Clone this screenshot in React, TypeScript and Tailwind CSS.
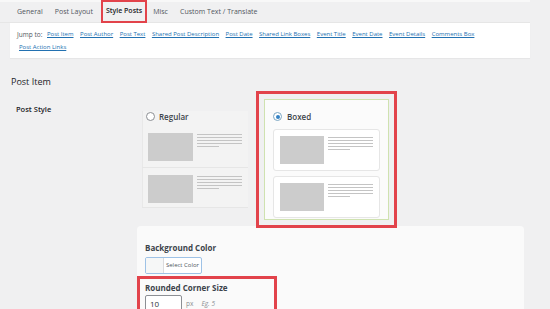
import * as React from "react";

const tabs = ["General", "Post Layout", "Style Posts", "Misc", "Custom Text / Translate"];

const jumpLinks = [
  "Post Item",
  "Post Author",
  "Post Text",
  "Shared Post Description",
  "Post Date",
  "Shared Link Boxes",
  "Event Title",
  "Event Date",
  "Event Details",
  "Comments Box",
  "Post Action Links",
];

const PreviewLines = () => (
  <div className="flex flex-col gap-[2px] pt-[1px]">
    <div className="h-px w-[45px] bg-[#c4c4c4]" />
    <div className="h-px w-[45px] bg-[#c4c4c4]" />
    <div className="h-px w-[45px] bg-[#c4c4c4]" />
    <div className="h-px w-[45px] bg-[#c4c4c4]" />
    <div className="h-px w-[22px] bg-[#c4c4c4]" />
  </div>
);

const PreviewItem = () => (
  <div className="flex gap-[4px]">
    <div className="h-[28px] w-[45px] bg-[#cccccc]" />
    <PreviewLines />
  </div>
);

const Radio = ({ checked }: { checked?: boolean }) => (
  <span
    className={`flex size-[9px] items-center justify-center rounded-full border bg-white ${
      checked ? "border-[#7aa6c2]" : "border-[#8c8f94]"
    }`}
  >
    {checked && <span className="size-[4px] rounded-full bg-[#3582c4]" />}
  </span>
);

export default function App() {
  return (
    <div
      className="h-[309px] w-[550px] overflow-hidden bg-[#f0f0f1] text-[#3c434a]"
      style={{ fontFamily: '"Open Sans", "Noto Sans", sans-serif' }}
    >
      {/* tabs */}
      <div className="flex h-[23px] w-[530px] items-start border-t-2 border-[#f8f8f8] pl-[11px] shadow-[inset_0_-1px_0_#e6e6e6]">
        {tabs.map((t) =>
          t === "Style Posts" ? (
            <div
              key={t}
              className="-mt-[2px] ml-[2px] flex h-[23px] items-center border-2 border-[#e2434b] px-[3px] text-[7px] font-semibold text-[#1d2327]"
            >
              {t}
            </div>
          ) : (
            <div key={t} className="flex h-[20px] items-center px-[6px] text-[7px] text-[#50575e]">
              {t}
            </div>
          )
        )}
      </div>

      {/* jump to */}
      <div className="mx-[10px] w-[520px] bg-white px-[7px] pb-[5px] pt-[6px] shadow-[0_1px_1px_rgba(0,0,0,0.04)]">
        <div className="flex flex-wrap gap-x-[6.5px] gap-y-[2px] text-[6px] leading-[11px]">
          <span className="mr-[-1.5px] w-[25px] shrink-0 whitespace-nowrap text-[6.5px] text-[#50575e]">Jump to:</span>
          {jumpLinks.map((l, i) => (
            <a
              key={l}
              className={`whitespace-nowrap text-[#2271b1] underline ${i === jumpLinks.length - 1 ? "basis-full pl-[2px]" : ""}`}
            >
              {l}
            </a>
          ))}
        </div>
      </div>

      {/* section heading */}
      <div className="pl-[11px] pt-[17px] text-[9px] font-medium text-[#1d2327]">Post Item</div>

      {/* post style row */}
      <div className="mt-[2px] flex">
        <div className="w-[142px] pl-[16px] pt-[13px] text-[7.5px] font-semibold text-[#1d2327]">Post Style</div>

        <div className="flex items-start gap-[8px]">
          {/* regular */}
          <div className="mt-[20px] w-[106px] bg-[#f3f3f3] shadow-[inset_1px_0_0_#e8e8e8]">
            <div className="flex items-center gap-[4px] pl-[4px]">
              <Radio />
              <span className="text-[8px] font-semibold text-[#3c434a]">Regular</span>
            </div>
            <div className="border-b border-[#e6e6e6] pb-[6px] pl-[6px] pt-[10px]">
              <PreviewItem />
            </div>
            <div className="border-b border-[#e6e6e6] pb-[4px] pl-[6px] pt-[7px]">
              <PreviewItem />
            </div>
          </div>

          {/* boxed */}
          <div className="h-[137px] w-[141px] border-[3px] border-[#e2434b] p-[5px]">
            <div className="h-full w-full border border-[#cfe2b0] bg-[#fbfbfb] px-[8px] pt-[11px]">
              <div className="flex items-center gap-[5px]">
                <Radio checked />
                <span className="text-[8px] font-semibold text-[#3c434a]">Boxed</span>
              </div>
              <div className="mt-[6px] flex flex-col gap-[5px]">
                <div className="w-[107px] rounded-[3px] border border-[#e6e6e6] bg-white p-[6px]">
                  <PreviewItem />
                </div>
                <div className="w-[107px] rounded-[3px] border border-[#e6e6e6] bg-white p-[6px]">
                  <PreviewItem />
                </div>
              </div>
            </div>
          </div>
        </div>
      </div>

      {/* settings panel */}
      <div className="-mt-[2px] ml-[137px] w-[387px] rounded-t-[4px] bg-[#fafafa] pt-[16px]">
        <div className="pl-[8px] text-[8px] font-bold text-[#3c434a]">Background Color</div>
        <div className="ml-[8px] mt-[3px] flex h-[17px] w-[57px] overflow-hidden rounded-[2px] border border-[#9ec2e6] bg-white">
          <div className="w-[18px] border-r border-[#dcdcde] bg-[#f6f7f7]" />
          <div className="flex flex-1 items-center justify-center text-[6px] text-[#50575e]">Select Color</div>
        </div>
        <div className="mt-[2px] w-[140px] border-[3px] border-b-0 border-[#e2434b] pl-[5px] pt-[3px]">
          <div className="text-[8px] font-bold text-[#3c434a]">Rounded Corner Size</div>
          <div className="mt-[1px] flex items-center">
            <div className="flex h-[18px] w-[37px] items-center rounded-[2px] border border-[#8c8f94] bg-white pl-[4px] text-[8px] text-[#2c3338]">
              10
            </div>
            <span className="ml-[4px] text-[6.5px] text-[#8c8f94]">px</span>
            <span className="ml-[8px] text-[6.5px] italic text-[#8c8f94]">Eg. 5</span>
          </div>
        </div>
      </div>
    </div>
  );
}
